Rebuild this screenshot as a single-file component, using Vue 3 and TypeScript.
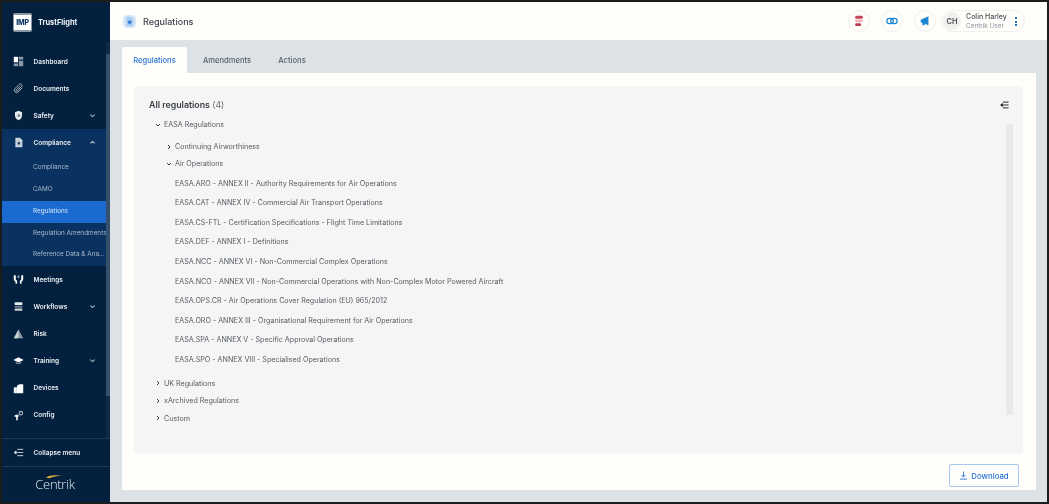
<script setup lang="ts">
interface NavItem { label: string; icon: string; chevron?: 'up' | 'down'; subs?: { label: string; active?: boolean }[] }
const nav: NavItem[] = [
  { label: 'Dashboard', icon: 'dash' },
  { label: 'Documents', icon: 'clip' },
  { label: 'Safety', icon: 'shield', chevron: 'down' },
  { label: 'Compliance', icon: 'doc', chevron: 'up', subs: [
    { label: 'Compliance' }, { label: 'CAMO' }, { label: 'Regulations', active: true },
    { label: 'Regulation Amendments' }, { label: 'Reference Data & Ana...' } ] },
  { label: 'Meetings', icon: 'meet' },
  { label: 'Workflows', icon: 'flow', chevron: 'down' },
  { label: 'Risk', icon: 'risk' },
  { label: 'Training', icon: 'train', chevron: 'down' },
  { label: 'Devices', icon: 'dev' },
  { label: 'Config', icon: 'conf' },
]
const airOps = [
  'EASA.ARO - ANNEX II - Authority Requirements for Air Operations',
  'EASA.CAT - ANNEX IV - Commercial Air Transport Operations',
  'EASA.CS-FTL - Certification Specifications - Flight Time Limitations',
  'EASA.DEF - ANNEX I - Definitions',
  'EASA.NCC - ANNEX VI - Non-Commercial Complex Operations',
  'EASA.NCO - ANNEX VII - Non-Commercial Operations with Non-Complex Motor Powered Aircraft',
  'EASA.OPS.CR - Air Operations Cover Regulation (EU) 965/2012',
  'EASA.ORO - ANNEX III - Organisational Requirement for Air Operations',
  'EASA.SPA - ANNEX V - Specific Approval Operations',
  'EASA.SPO - ANNEX VIII - Specialised Operations',
]
const tabs = ['Regulations', 'Amendments', 'Actions']
</script>

<template>
  <div class="frame">
    <aside class="sidebar">
      <div class="brand">
        <span class="logo">IMP</span>
        <span class="brand-name">TrustFlight</span>
      </div>
      <div class="nav-wrap">
        <nav class="nav">
          <div v-for="item in nav" :key="item.label" :class="{ group: item.subs }">
            <div class="nav-row">
              <svg class="nav-icon" viewBox="0 0 14 14" fill="#dfe5ea">
                <template v-if="item.icon === 'dash'">
                  <rect x="1" y="1" width="5.5" height="7" fill="#fff" />
                  <rect x="1" y="9.5" width="5.5" height="3.5" fill="#8d9aa8" />
                  <rect x="7.5" y="1" width="5.5" height="3.5" fill="#8d9aa8" />
                  <rect x="7.5" y="6" width="5.5" height="7" fill="#8d9aa8" />
                </template>
                <path v-else-if="item.icon === 'clip'" d="M12 6 6.5 11.5a3 3 0 0 1-4.2-4.2L8 1.8a2 2 0 0 1 2.9 2.8L5.5 10a.9.9 0 0 1-1.3-1.3L9 4" fill="none" stroke="#aeb8c2" stroke-width="1.2" />
                <template v-else-if="item.icon === 'shield'">
                  <path d="M7 1 11.5 3v4c0 3-2 5-4.500 6C4.500 12 2.500 10 2.500 7V3Z" fill="#e6ebef" />
                  <circle cx="7.500" cy="7" r="2" fill="#7f8e9d" />
                </template>
                <template v-else-if="item.icon === 'doc'">
                  <path d="M3 1h6l3 3v9H3Z" fill="#c9d2db" />
                  <path d="M7.500 5.500l.7 1.500 1.600.2-1.200 1.100.3 1.600-1.400-.8-1.400.8.3-1.600-1.200-1.100 1.600-.2Z" fill="#0a3260" />
                </template>
                <template v-else-if="item.icon === 'meet'">
                  <path d="M1 1.500h2.500v5c0 1 .7 1.500 1.700 2V12.500H3.200V9.800C1.900 9.200 1 8 1 6.500Z" fill="#fff" />
                  <path d="M13 1.500h-2.500v5c0 1-.7 1.500-1.700 2V12.500h2V9.800c1.300-.6 2.200-1.800 2.200-3.300Z" fill="#fff" />
                  <circle cx="7" cy="3.500" r="1.500" fill="#8d9aa8" />
                </template>
                <template v-else-if="item.icon === 'flow'">
                  <rect x="2" y="1.500" width="10" height="3.500" rx="1" fill="#e6ebef" />
                  <rect x="2" y="6" width="10" height="2.500" rx="1" fill="#6f7f8f" />
                  <rect x="2" y="9.500" width="10" height="3" rx="1" fill="#c8d0d8" />
                </template>
                <template v-else-if="item.icon === 'risk'">
                  <path d="M7 2 13 13H1Z" fill="#8d9aa8" />
                  <path d="M7 2v11H1Z" fill="#c8d0d8" />
                </template>
                <template v-else-if="item.icon === 'train'">
                  <path d="M7 3 13.500 6.500 7 9.500.5 6.500Z" fill="#fff" />
                  <path d="M3.500 9v1.500c2 1.300 5 1.300 7 0V9L7 10.700Z" fill="#aeb8c2" />
                </template>
                <template v-else-if="item.icon === 'dev'">
                  <path d="M1 5.500 5 5.500V13H1Z" fill="#eef1f4" />
                  <path d="M5 3.500 8 1.500h5V13H5Z" fill="#fff" />
                </template>
                <template v-else>
                  <path d="M4 6h3v2.500H6V13H4V8.500H2V7Z" fill="#fff" />
                  <circle cx="10" cy="4" r="2.200" fill="none" stroke="#aeb8c2" stroke-width="1.400" />
                </template>
              </svg>
              <span class="nav-label">{{ item.label }}</span>
              <svg v-if="item.chevron" class="chev" viewBox="0 0 8 8">
                <path :d="item.chevron === 'up' ? 'M1.500 5 4 2.700 6.500 5' : 'M1.500 3 4 5.300 6.500 3'" fill="none" stroke="#a9b5c0" stroke-width="1.200" />
              </svg>
            </div>
            <div v-for="s in item.subs" :key="s.label" class="sub" :class="{ active: s.active }">{{ s.label }}</div>
          </div>
          <div class="peek"><svg class="nav-icon" viewBox="0 0 14 14"><rect x="1" y="4" width="10" height="3" fill="#7f8e9d" /></svg></div>
        </nav>
        <div class="scroll"><div class="thumb"></div></div>
      </div>
      <div class="collapse">
        <svg class="nav-icon" viewBox="0 0 14 14" fill="none" stroke="#dfe5ea" stroke-width="1.100">
          <path d="M5.500 3H13M5.500 7H13M5.500 11H13" />
          <path d="M4 5 1.500 7 4 9Z" fill="#dfe5ea" />
        </svg>
        <span class="nav-label">Collapse menu</span>
      </div>
      <div class="centrik">
        <svg class="swoosh" viewBox="0 0 20 5"><path d="M1 3.500C6 .5 13 .5 19 2 13 2 8 2.500 5 4.500Z" fill="#e8b23c" /></svg>
        <span>Centrik</span>
      </div>
    </aside>

    <main class="main">
      <header class="topbar">
        <svg class="page-icon" viewBox="0 0 14 14">
          <rect x="0" y="0" width="14" height="14" rx="5" fill="#d7e6f7" />
          <path d="M3.500 2h5l2.500 2.500V12h-7.500Z" fill="#a9cdf1" />
          <path d="M7.200 5l.8 1.700 1.800.2-1.300 1.200.3 1.800-1.600-.9-1.600.9.3-1.800-1.300-1.200 1.800-.2Z" fill="#1f6fd1" />
        </svg>
        <h1 class="title">Regulations</h1>
        <div class="actions">
          <span class="round">
            <svg viewBox="0 0 14 14" class="ri"><rect x="2.500" y="1" width="9" height="3.300" rx="1.500" fill="#c2475a" /><rect x="2.500" y="5.300" width="9" height="3.300" rx="1.500" fill="#edb4ba" /><rect x="2.500" y="9.600" width="7" height="3.300" rx="1.500" fill="#b8394f" /></svg>
          </span>
          <span class="round">
            <svg viewBox="0 0 14 14" class="ri"><rect x="1" y="4" width="7.500" height="6" rx="3" fill="none" stroke="#1c86d1" stroke-width="1.500" /><rect x="5.500" y="4" width="7.500" height="6" rx="3" fill="none" stroke="#1c86d1" stroke-width="1.500" /></svg>
          </span>
          <span class="round">
            <svg viewBox="0 0 14 14" class="ri"><path d="M2 5.500 11 1.500V12L2 8.500Z" fill="#1c86d1" /><rect x="4" y="8" width="2.500" height="4" fill="#1c86d1" /></svg>
          </span>
          <div class="user">
            <span class="avatar">CH</span>
            <span class="who"><b>Colin Harley</b><i>Centrik User</i></span>
            <span class="dots"><em></em><em></em><em></em></span>
          </div>
        </div>
      </header>

      <section class="content">
        <div class="tabs">
          <div v-for="(t, i) in tabs" :key="t" class="tab" :class="{ on: i === 0 }">{{ t }}</div>
        </div>
        <div class="panel">
          <div class="card">
            <div class="card-head">
              <span class="card-title">All regulations <span class="count">(4)</span></span>
              <svg class="tree-toggle" viewBox="0 0 11 9" fill="none" stroke="#23282d" stroke-width="1.200">
                <path d="M3.500 1H10.500M3.500 4.500H10.500M3.500 8H10.500" />
                <path d="M3 2.800.8 4.500 3 6.200Z" fill="#23282d" />
              </svg>
            </div>
            <div class="tree-wrap">
              <div class="tree">
                <div class="t-row top first"><svg class="c" viewBox="0 0 6 6"><path d="M1 2 3 4 5 2" /></svg>EASA Regulations</div>
                <div class="t-row l2 a"><svg class="c" viewBox="0 0 6 6"><path d="M2 1 4 3 2 5" /></svg>Continuing Airworthiness</div>
                <div class="t-row l2 b"><svg class="c" viewBox="0 0 6 6"><path d="M1 2 3 4 5 2" /></svg>Air Operations</div>
                <div v-for="r in airOps" :key="r" class="leaf">{{ r }}</div>
                <div class="t-row top gap"><svg class="c" viewBox="0 0 6 6"><path d="M2 1 4 3 2 5" /></svg>UK Regulations</div>
                <div class="t-row top"><svg class="c" viewBox="0 0 6 6"><path d="M2 1 4 3 2 5" /></svg>xArchived Regulations</div>
                <div class="t-row top"><svg class="c" viewBox="0 0 6 6"><path d="M2 1 4 3 2 5" /></svg>Custom</div>
              </div>
              <div class="tree-scroll"></div>
            </div>
          </div>
          <div class="foot">
            <button class="dl">
              <svg viewBox="0 0 10 10" fill="none" stroke="#2a74d6" stroke-width="1"><path d="M5 .5V6.500M2.800 4.500 5 6.800 7.200 4.500M1 9H9" /></svg>
              Download
            </button>
          </div>
        </div>
      </section>
    </main>
  </div>
</template>

<style>
html, body { margin: 0; background: #1a1a1a; }
</style>

<style scoped>
* { box-sizing: border-box; }
.frame {
  width: 1049px; height: 504px; display: flex; overflow: hidden;
  border: 2px solid #1c1c1c;
  font-family: Inter, "Liberation Sans", sans-serif;
  filter: blur(0.3px);
}
.sidebar { width: 108px; flex: none; background: #03213f; display: flex; flex-direction: column; color: #fff; }
.brand { height: 40px; display: flex; align-items: center; padding-left: 11px; gap: 6px; flex: none; }
.logo {
  width: 19px; height: 19px; background: #fff; border: 1px solid #8a97a5; border-width: 2px 1px; border-radius: 2px;
  color: #0d3a66; font-size: 7px; font-weight: 800; display: flex; align-items: center; justify-content: center;
  letter-spacing: -0.2px;
}
.brand-name { font-size: 7.4px; font-weight: 700; color: #eef2f5; }
.nav-wrap { flex: 1; min-height: 0; display: flex; overflow: hidden; border-bottom: 1px solid #1b3a5a; }
.nav { flex: 1; min-width: 0; padding-top: 6px; overflow: hidden; }
.nav-row { height: 27.1px; display: flex; align-items: center; padding-left: 11px; position: relative; }
.group .nav-row { margin-bottom: 0.800px; }
.nav-icon { width: 11px; height: 11px; flex: none; }
.nav-label { margin-left: 9.500px; font-size: 6.500px; font-weight: 600; color: #e9edf1; white-space: nowrap; }
.chev { width: 7px; height: 7px; position: absolute; left: 87px; top: 10px; }
.group { background: #0a3260; }
.sub { height: 21.800px; line-height: 21.800px; padding-left: 31px; font-size: 6.400px; color: #a9b8c8; white-space: nowrap; overflow: hidden; }
.sub.active { background: #1b6ad0; color: #d5e5f8; }
.peek { height: 20px; padding: 4px 0 0 11px; }
.scroll { width: 4px; flex: none; background: #0f2b48; padding-top: 12px; }
.thumb { height: 342px; background: #34506c; }
.collapse { height: 28px; display: flex; align-items: center; padding-left: 11px; flex: none; border-bottom: 1px solid #1b3a5a; }
.centrik { height: 35px; flex: none; display: flex; flex-direction: column; align-items: center; justify-content: center; position: relative; font-size: 13px; font-weight: 300; color: #e6ebef; letter-spacing: -0.3px; font-family: "Open Sans", sans-serif; padding: 0 2px 3px 0; }
.centrik span { line-height: 14px; margin-top: 2px; }
.swoosh { width: 18px; height: 5px; position: absolute; left: 43px; top: 7px; }

.main { flex: 1; min-width: 0; display: flex; flex-direction: column; background: #dce2e5; }
.topbar { height: 38px; flex: none; background: #fffefb; display: flex; align-items: center; padding-left: 13px; }
.page-icon { width: 13px; height: 13px; flex: none; }
.title { margin: 0 0 0 7px; font-size: 9px; font-weight: 500; color: #3c444c; }
.actions { margin-left: auto; display: flex; align-items: center; padding-right: 22px; }
.round { width: 22px; height: 22px; border-radius: 50%; border: 1px solid #efefec; display: flex; align-items: center; justify-content: center; margin-right: 11px; background: #fffefb; }
.round:nth-child(3) { margin-right: 5px; }
.ri { width: 12px; height: 12px; }
.user { width: 84px; height: 22px; border: 1px solid #efefec; border-radius: 11px; display: flex; align-items: center; padding-left: 1px; position: relative; }
.avatar { width: 18px; height: 18px; border-radius: 50%; background: #f0f0ee; color: #444b52; font-size: 7.500px; font-weight: 600; display: flex; align-items: center; justify-content: center; }
.who { display: flex; flex-direction: column; margin-left: 5px; gap: 2px; }
.who b { font-size: 7px; font-weight: 500; color: #4a5158; line-height: 8px; }
.who i { font-size: 6.400px; font-style: normal; color: #8b9299; line-height: 7px; }
.dots { position: absolute; right: 7px; top: 6px; display: flex; flex-direction: column; gap: 1.500px; }
.dots em { width: 2px; height: 2px; background: #1c6fc9; display: block; }

.content { flex: 1; min-height: 0; padding: 7px 11px 12px 12px; display: flex; flex-direction: column; }
.tabs { display: flex; height: 26px; flex: none; }
.tab { width: 65px; height: 26px; display: flex; align-items: center; justify-content: center; font-size: 7.600px; font-weight: 500; color: #5a6269; border-radius: 2px 2px 0 0; }
.tab.on { background: #fffefb; color: #2a74d6; }
.tab:nth-child(2) { width: 80px; }
.tab:nth-child(3) { width: 50px; }
.panel { flex: 1; min-height: 0; background: #fffefb; padding: 14px 14px 0 13px; display: flex; flex-direction: column; }
.card { height: 366px; flex: none; background: #f5f5f5; border-radius: 2px; box-shadow: 0 0 2px #e4e4e2; display: flex; flex-direction: column; padding-left: 14px; }
.card-head { height: 35px; flex: none; display: flex; align-items: center; justify-content: space-between; padding-right: 13px; }
.card-title { font-size: 8.800px; font-weight: 600; color: #3a4148; }
.count { font-weight: 400; color: #6a7178; }
.tree-toggle { width: 9px; height: 8px; }
.tree-wrap { flex: 1; min-height: 0; display: flex; padding-top: 2px; }
.tree { flex: 1; min-width: 0; }
.t-row { display: flex; align-items: center; font-size: 7.130px; color: #555c63; white-space: nowrap; height: 17.500px; }
.t-row.first { margin-top: -8px; height: 17px; }
.t-row.l2 { padding-left: 17px; height: 17px; }
.t-row.a { margin-top: 5.300px; }
.t-row.b { margin-bottom: 1.300px; }
.t-row.gap { margin-top: 5px; }
.t-row.top { padding-left: 6px; }
.c { width: 6px; height: 6px; margin-right: 3px; fill: none; stroke: #3a4148; stroke-width: 1; flex: none; }
.leaf { height: 19.600px; line-height: 19.600px; padding-left: 26px; font-size: 7.130px; color: #555c63; white-space: nowrap; }
.tree-scroll { width: 7px; height: 291px; margin-right: 9px; background: #e9e9e9; flex: none; }
.foot { flex: 1; display: flex; justify-content: flex-end; padding: 11px 3px 0 0; align-items: flex-start; }
.dl { width: 70px; height: 23px; border: 1px solid #a6c8ef; border-radius: 2px; background: #fffefb; color: #2a74d6; font: 500 7.800px Inter, "Liberation Sans", sans-serif; display: flex; align-items: center; justify-content: center; gap: 3px; padding: 0; }
.dl svg { width: 9px; height: 9px; }
</style>
